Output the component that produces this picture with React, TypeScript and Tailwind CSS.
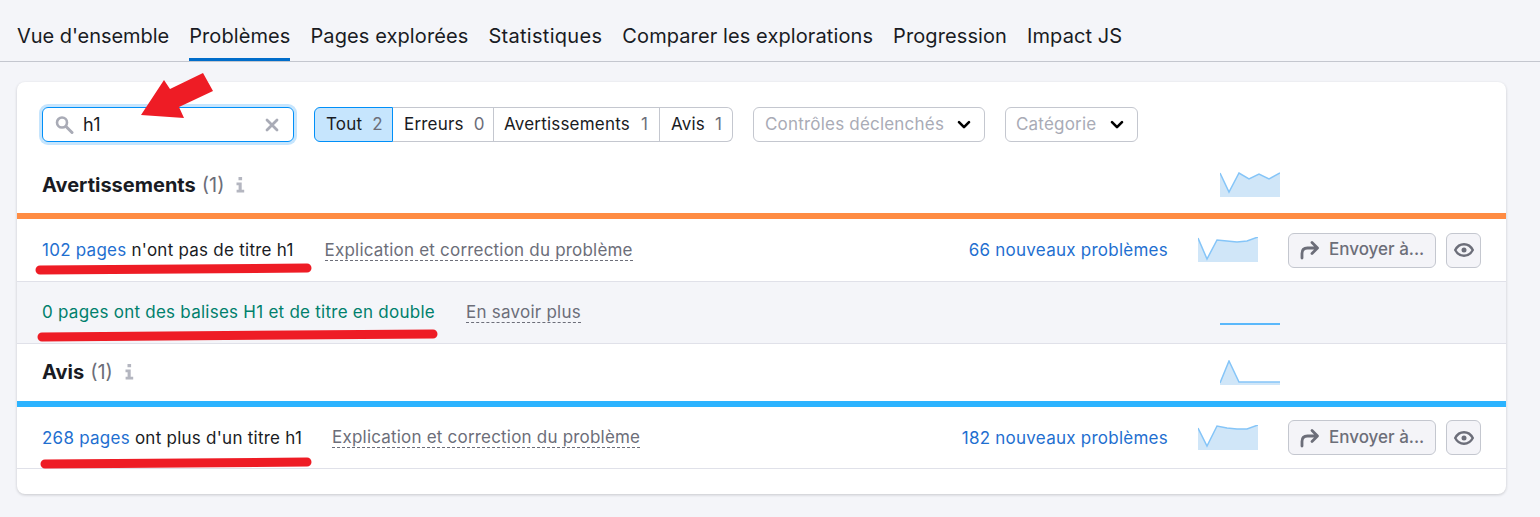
const tabs = [
  { label: "Vue d'ensemble", spacing: 'tracking-[-0.05px]' },
  { label: 'Problèmes', spacing: 'tracking-[0.1px]' },
  { label: 'Pages explorées', spacing: 'tracking-[0.1px]' },
  { label: 'Statistiques', spacing: 'tracking-[0.3px]' },
  { label: 'Comparer les explorations', spacing: 'tracking-[0.1px]' },
  { label: 'Progression', spacing: 'tracking-[0.1px]' },
  { label: 'Impact JS', spacing: 'tracking-[0.1px]' },
];

function Spark({ line, area }: { line: string; area: string }) {
  return (
    <svg width="60" height="26" viewBox="0 0 60 26" className="block shrink-0">
      <path d={area} fill="#d0e6f8" />
      <path d={line} fill="none" stroke="#85c5f8" strokeWidth="1.5" />
    </svg>
  );
}

function Info() {
  return (
    <svg width="10" height="16" viewBox="0 0 10 16" className="block">
      <path d="M3.500 0h3.600v3.200H3.500zM1.500 5.500h5.200v7.200h2.500V15.500H1.600v-2.800h2V8.300H1.500z" fill="#b4b6c0" />
    </svg>
  );
}

function SectionHead({ title, count, spark, textPad }: { title: string; count: string; spark: React.ReactNode; textPad: string }) {
  return (
    <div className="flex items-center justify-between pl-[25px] pr-[226px] h-[57px]">
      <div className={`flex items-center ${textPad}`}>
        <span className="text-[20px] font-bold text-[#191b23]">{title}</span>
        <span className="text-[20px] text-[#6c6e79] ml-[6px]">{count}</span>
        <span className="ml-[11px]"><Info /></span>
      </div>
      {spark}
    </div>
  );
}

function IssueRow({ link, rest, help, trend, line, area, height, gap }: { link: string; rest: string; help: string; trend: string; line: string; area: string; height: string; gap: string }) {
  return (
    <div className={`flex items-center justify-between ${height} pl-[25px] pr-[25px] border-b border-[#e0e1e9] text-[17px] tracking-[0.25px]`}>
      <div className="flex items-center">
        <span className="text-[#191b23] whitespace-nowrap leading-[26px]"><span className="text-[#1f6fd0]">{link}</span> {rest}</span>
        <span className={`${gap} text-[#6c6e79] border-b border-dashed border-[#6c6e79] leading-[20px] whitespace-nowrap tracking-[0.2px]`}>{help}</span>
      </div>
      <div className="flex items-center">
        <span className="text-[#1f6fd0] whitespace-nowrap leading-[26px]">{trend}</span>
        <span className="ml-[30px]"><Spark line={line} area={area} /></span>
        <button className="ml-[30px] flex items-center w-[148px] h-[35px] pl-[10px] rounded-md border border-[#c4c7cf] bg-[#f4f4f8] text-[#6c6e79] tracking-normal">
          <svg width="22" height="20" viewBox="0 0 22 20" className="shrink-0">
            <path d="M3 18v-4.500C3 10 5 8 8.500 8H18M13 2.500 18.500 8 13 13.500" fill="none" stroke="#6c6e79" strokeWidth="2.800" strokeLinecap="round" strokeLinejoin="round" />
          </svg>
          <span className="ml-[8px] font-medium whitespace-nowrap">Envoyer à...</span>
        </button>
        <button className="ml-[10px] flex items-center justify-center w-[35px] h-[35px] rounded-md border border-[#c4c7cf] bg-[#f4f4f8]">
          <svg width="20" height="14" viewBox="0 0 20 14">
            <path d="M1.200 7c2-3.800 5-5.800 8.800-5.800s6.800 2 8.800 5.800c-2 3.800-5 5.800-8.800 5.800S3.200 10.800 1.200 7Z" fill="none" stroke="#6c6e79" strokeWidth="2.400" />
            <circle cx="10" cy="7" r="2.500" fill="#6c6e79" />
          </svg>
        </button>
      </div>
    </div>
  );
}

function Chevron() {
  return (
    <svg width="14" height="10" viewBox="0 0 14 10" className="shrink-0">
      <path d="M2 2.200 7 7.200l5-5" fill="none" stroke="#000" strokeWidth="2.600" strokeLinecap="round" strokeLinejoin="round" />
    </svg>
  );
}

export default function App() {
  return (
    <div className="relative w-[1540px] h-[517px] overflow-hidden bg-[#f4f5f9] font-['Inter',sans-serif] text-[#191b23]">
      {/* Tabs */}
      <nav className="flex h-[62px] pl-[17px] gap-[20px] border-b border-[#c4c7cf]">
        {tabs.map((t) => (
          <div key={t.label} className={t.label === 'Problèmes'
            ? `h-[61px] pt-[22px] text-[20px] leading-[28px] border-b-[3px] border-[#006dca] whitespace-nowrap ${t.spacing}`
            : `h-[61px] pt-[22px] text-[20px] leading-[28px] whitespace-nowrap ${t.spacing}`}>
            {t.label}
          </div>
        ))}
      </nav>

      {/* Card */}
      <div className="ml-[17px] mt-[20px] w-[1489px] h-[412px] bg-white rounded-lg shadow-[0_1px_3px_rgba(25,27,35,0.2)]">
        <div className="flex items-center pl-[25px] pt-[25px] h-[60px] text-[17px] tracking-[0.2px]">
          <div className="flex items-center w-[252px] h-[35px] pl-[11px] pr-[14px] rounded-md border border-[#008ff8] ring-[3px] ring-[#c6e5fd]">
            <svg width="20" height="20" viewBox="0 0 20 20" className="shrink-0">
              <circle cx="8" cy="7.500" r="5" fill="none" stroke="#a9abb6" strokeWidth="2.600" />
              <path d="m12 11.500 6 6" stroke="#a9abb6" strokeWidth="3" strokeLinecap="round" />
            </svg>
            <span className="ml-[9px] flex-1 text-[18px]">h1</span>
            <svg width="14" height="14" viewBox="0 0 14 14" className="shrink-0">
              <path d="m2 2 10 10m0-10L2 12" stroke="#a9abb6" strokeWidth="2.800" strokeLinecap="round" />
            </svg>
          </div>

          <div className="ml-[20px] flex h-[35px]">
            <div className="flex items-center w-[79px] pl-[11px] rounded-l-md border border-[#008ff8] bg-[#c6e5fd]">
              Tout<span className="ml-[10px] text-[#6c6e79]">2</span>
            </div>
            <div className="flex items-center w-[101px] pl-[11px] border-y border-r border-[#c4c7cf]">
              Erreurs<span className="ml-[10px] text-[#6c6e79]">0</span>
            </div>
            <div className="flex items-center w-[166px] pl-[10px] border-y border-r border-[#c4c7cf]">
              Avertissements<span className="ml-[11px] text-[#6c6e79]">1</span>
            </div>
            <div className="flex items-center w-[73px] pl-[11px] rounded-r-md border-y border-r border-[#c4c7cf]">
              Avis<span className="ml-[10px] text-[#6c6e79]">1</span>
            </div>
          </div>

          <div className="ml-[20px] flex items-center justify-between w-[232px] h-[35px] pl-[11px] pr-[13px] rounded-md border border-[#c4c7cf] text-[#a9abb6]">
            Contrôles déclenchés <Chevron />
          </div>
          <div className="ml-[20px] flex items-center justify-between w-[133px] h-[35px] pl-[10px] pr-[13px] rounded-md border border-[#c4c7cf] text-[#a9abb6]">
            Catégorie <Chevron />
          </div>
        </div>

        <div className="mt-[14px]">
          <SectionHead
            title="Avertissements"
            count="(1)"
            textPad="pt-0"
            spark={<Spark line="M0 1 9 20 19 1 29 7 39 2 49 7 60 1" area="M0 1 9 20 19 1 29 7 39 2 49 7 60 1V25H0Z" />}
          />
          <div className="h-[6px] bg-[#ff8c43]" />
          <IssueRow
            link="102 pages"
            rest="n'ont pas de titre h1"
            help="Explication et correction du problème"
            trend="66 nouveaux problèmes"
            height="h-[63px]"
            gap="ml-[31px]"
            line="M0 1 9 22 19 3 29 4 39 5 49 4 60 0"
            area="M0 1 9 22 19 3 29 4 39 5 49 4 60 0V25H0Z"
          />
          <div className="flex items-center justify-between h-[62px] pl-[25px] pr-[226px] bg-[#f4f5f9] border-b border-[#e0e1e9] text-[17px] tracking-[0.25px]">
            <div className="flex items-center">
              <span className="text-[#00806c] whitespace-nowrap">0 pages ont des balises H1 et de titre en double</span>
              <span className="ml-[31px] text-[#6c6e79] border-b border-dashed border-[#6c6e79] leading-[20px]">En savoir plus</span>
            </div>
            <div className="w-[60px] h-[2px] mt-[23px] bg-[#5ab8fb]" />
          </div>
          <SectionHead
            title="Avis"
            count="(1)"
            textPad="pb-[2px]"
            spark={<Spark line="M0 23 9 1 19 22H60" area="M0 23 9 1 19 22H60V25H0Z" />}
          />
          <div className="h-[6px] bg-[#2bb3ff]" />
          <IssueRow
            link="268 pages"
            rest="ont plus d'un titre h1"
            help="Explication et correction du problème"
            trend="182 nouveaux problèmes"
            height="h-[62px]"
            gap="ml-[30px]"
            line="M0 3 9 21 19 1 29 3 39 4 49 4 60 0"
            area="M0 3 9 21 19 1 29 3 39 4 49 4 60 0V25H0Z"
          />
        </div>
      </div>

      {/* Red annotations drawn over the screenshot */}
      <svg width="1540" height="517" viewBox="0 0 1540 517" className="absolute inset-0 pointer-events-none">
        <path d="M203 73 213 91 179 107 184 118 141 115 164 80 170 89Z" fill="#ee1c25" />
        <path d="M40 270 307 268" stroke="#ee1c25" strokeWidth="9" strokeLinecap="round" />
        <path d="M42 337 433 334" stroke="#ee1c25" strokeWidth="9" strokeLinecap="round" />
        <path d="M45 464 307 462" stroke="#ee1c25" strokeWidth="9" strokeLinecap="round" />
      </svg>
    </div>
  );
}
